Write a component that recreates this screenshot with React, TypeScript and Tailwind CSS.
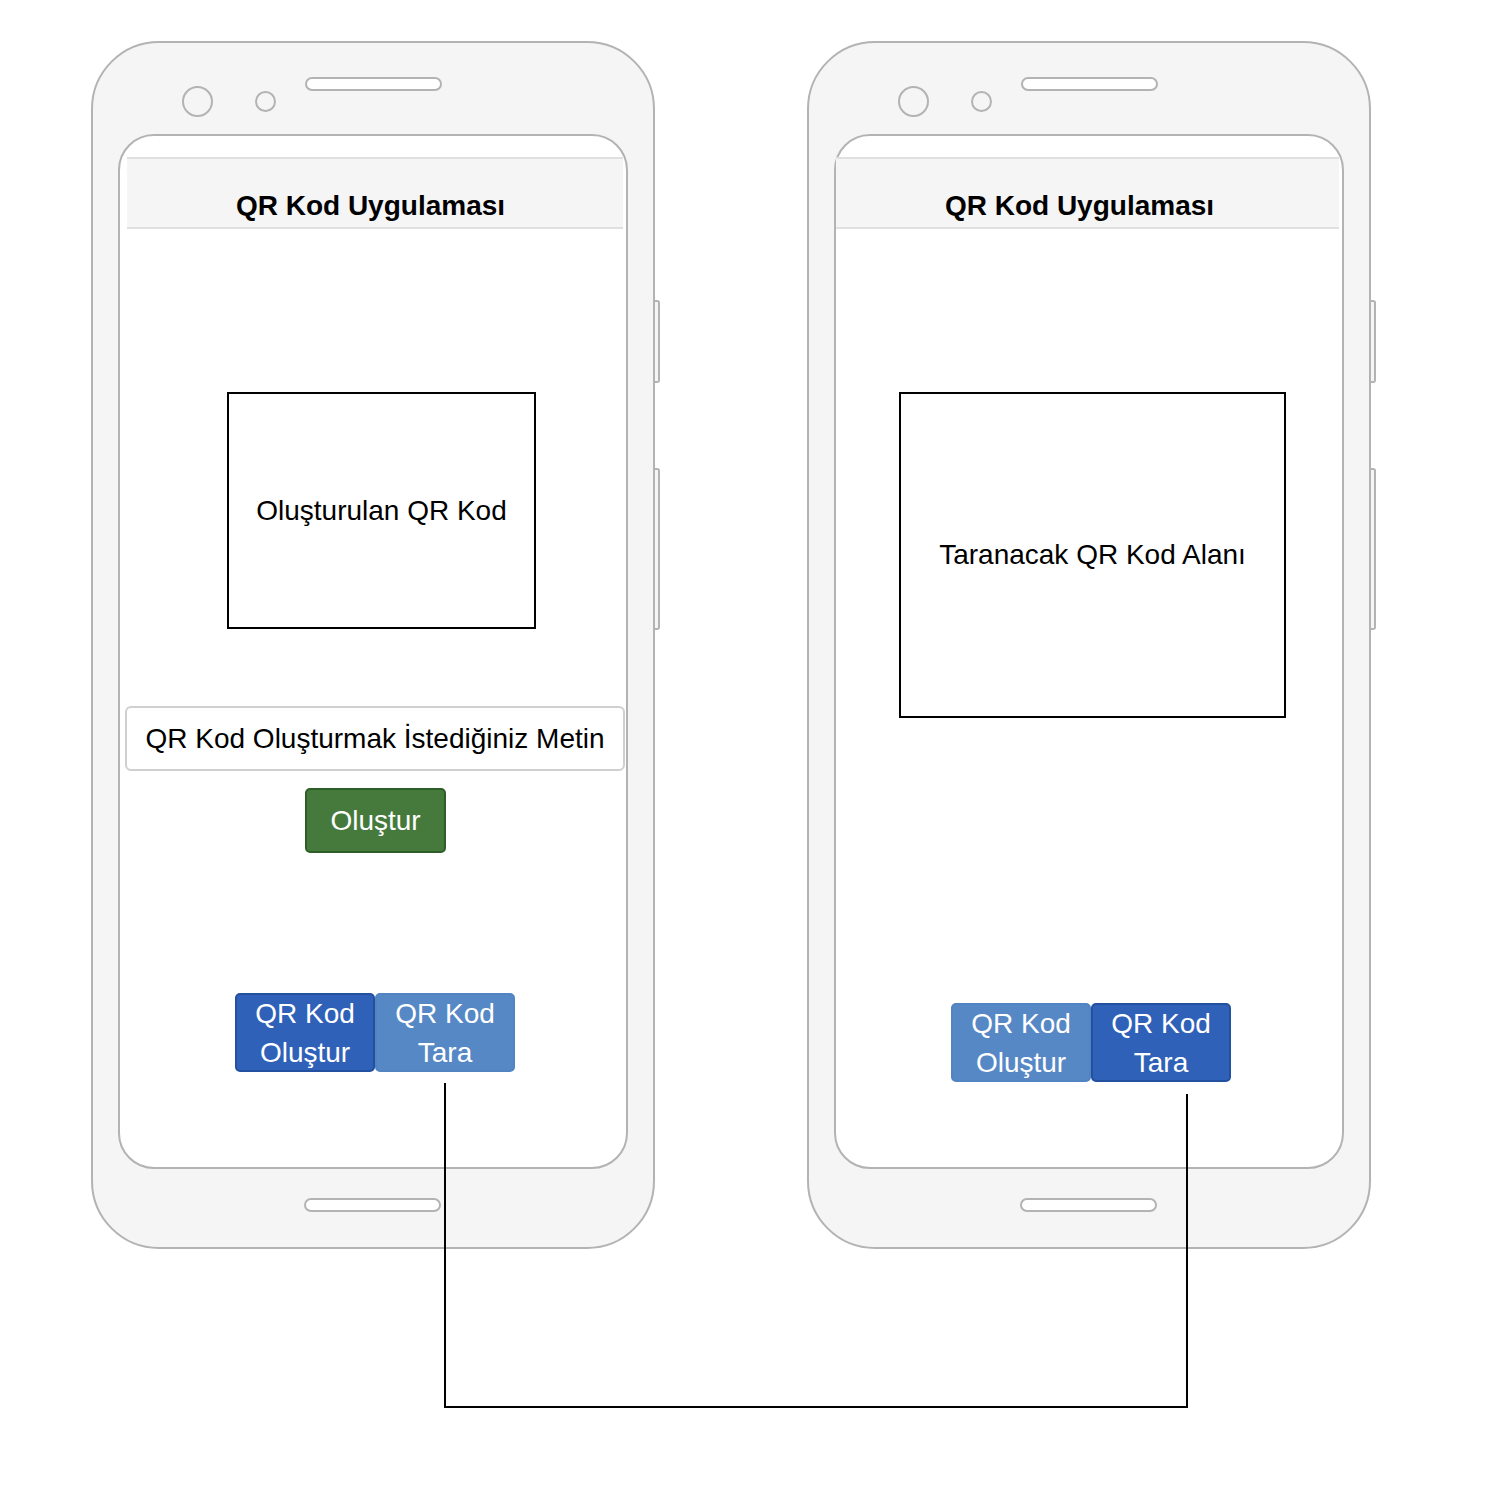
import React from "react";

const font = { fontFamily: '"Liberation Sans", Arial, Helvetica, sans-serif' };

function NavButtons({ active }: { active: "olustur" | "tara" }) {
  const dark = "bg-[#2f61b9] border-[#23509f]";
  const light = "bg-[#5688c6] border-[#5283c2]";
  return (
    <div className="flex">
      <div
        className={`w-[140px] h-[79px] border-2 rounded-[5px] flex flex-col items-center justify-center text-white text-[28px] leading-[39px] ${
          active === "olustur" ? dark : light
        }`}
      >
        <span>QR Kod</span>
        <span>Oluştur</span>
      </div>
      <div
        className={`w-[140px] h-[79px] border-2 rounded-[5px] flex flex-col items-center justify-center text-white text-[28px] leading-[39px] ${
          active === "tara" ? dark : light
        }`}
      >
        <span>QR Kod</span>
        <span>Tara</span>
      </div>
    </div>
  );
}

function Phone({ children }: { children: React.ReactNode }) {
  return (
    <div className="relative w-[564px] h-[1208px] shrink-0">
      {/* side buttons */}
      <div className="absolute left-[560px] top-[259px] w-[9px] h-[83px] bg-[#f5f5f5] border-2 border-l-0 border-[#b3b3b3] rounded-r-[3px]" />
      <div className="absolute left-[560px] top-[427px] w-[9px] h-[162px] bg-[#f5f5f5] border-2 border-l-0 border-[#b3b3b3] rounded-r-[3px]" />
      <div className="relative w-[564px] h-[1208px] bg-[#f5f5f5] border-2 border-[#b3b3b3] rounded-[68px] flex flex-col">
        {/* top bezel */}
        <div className="h-[91px] flex items-start">
          <div className="ml-[89px] mt-[43px] w-[31px] h-[31px] rounded-full border-2 border-[#b3b3b3] bg-[#f5f5f5]" />
          <div className="ml-[42px] mt-[48px] w-[21px] h-[21px] rounded-full border-2 border-[#b3b3b3] bg-[#f5f5f5]" />
          <div className="ml-[29px] mt-[34px] w-[137px] h-[14px] rounded-full border-2 border-[#b3b3b3] bg-white" />
        </div>
        {/* screen */}
        <div className="ml-[25px] w-[510px] h-[1035px] bg-white border-2 border-[#b3b3b3] rounded-[36px] flex flex-col">
          {children}
        </div>
        {/* bottom bezel */}
        <div className="flex">
          <div className="ml-[211px] mt-[29px] w-[137px] h-[14px] rounded-full border-2 border-[#b3b3b3] bg-white" />
        </div>
      </div>
    </div>
  );
}

function Header({ wide }: { wide?: boolean }) {
  return (
    <div
      className={`mt-[21px] h-[72px] bg-[#f5f5f5] border-t-2 border-b-2 border-[#e0e0e0] flex items-end justify-center pb-[5px] ${
        wide ? "ml-0 w-[503px] pr-[16px]" : "ml-[7px] w-[496px] pr-[9px]"
      }`}
    >
      <span className="text-[28px] font-bold leading-[32px] text-black">QR Kod Uygulaması</span>
    </div>
  );
}

export default function App() {
  return (
    <div className="relative w-[1510px] h-[1494px] bg-white text-black" style={font}>
      <div className="flex gap-[152px] pl-[91px] pt-[41px]">
        <Phone>
          <Header />
          <div className="mt-[163px] ml-[107px] w-[309px] h-[237px] border-2 border-black flex items-center justify-center">
            <span className="text-[28px] leading-[32px]">Oluşturulan QR Kod</span>
          </div>
          <div className="mt-[77px] ml-[5px] w-[500px] h-[65px] border-2 border-[#d0d0d0] rounded-[6px] flex items-center justify-center">
            <span className="text-[28px] leading-[32px]">QR Kod Oluşturmak İstediğiniz Metin</span>
          </div>
          <div className="mt-[17px] ml-[185px] w-[141px] h-[65px] bg-[#467a3d] border-2 border-[#2e5e27] rounded-[5px] flex items-center justify-center">
            <span className="text-[28px] leading-[32px] text-white">Oluştur</span>
          </div>
          <div className="mt-[140px] ml-[115px]">
            <NavButtons active="olustur" />
          </div>
        </Phone>
        <Phone>
          <Header wide />
          <div className="mt-[163px] ml-[63px] w-[387px] h-[326px] border-2 border-black flex items-center justify-center">
            <span className="text-[28px] leading-[32px]">Taranacak QR Kod Alanı</span>
          </div>
          <div className="mt-[285px] ml-[115px]">
            <NavButtons active="tara" />
          </div>
        </Phone>
      </div>
      <svg className="absolute left-0 top-0 pointer-events-none" width="1510" height="1494">
        <polyline
          points="445,1083 445,1407 1187,1407 1187,1094"
          fill="none"
          stroke="#000"
          strokeWidth="2"
        />
      </svg>
    </div>
  );
}
